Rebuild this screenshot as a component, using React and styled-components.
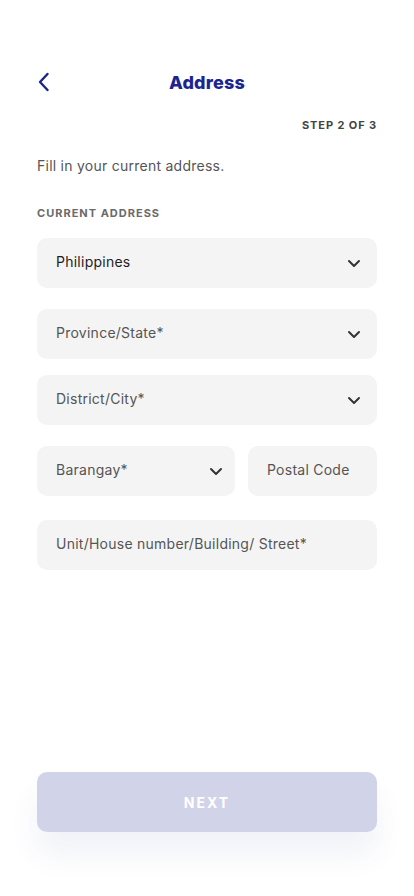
import React from 'react';
import styled, { createGlobalStyle } from 'styled-components';

const GlobalStyle = createGlobalStyle`
	* { box-sizing: border-box; }
	html, body { margin: 0; padding: 0; background: #ffffff; }
	body { font-family: Inter, "Noto Sans", sans-serif; }
`;

const Page = styled.div`
	min-height: 100vh;
	display: flex;
	flex-direction: column;
	padding: 62px 37px 64px 37px;
`;

const Header = styled.div`
	height: 40px;
	display: flex;
	align-items: center;
	justify-content: center;
	position: relative;
`;

const BackButton = styled.button`
	position: absolute;
	left: -4px;
	top: 50%;
	transform: translateY(-50%);
	border: none;
	background: none;
	padding: 4px;
	display: flex;
	cursor: pointer;
`;

const Title = styled.h1`
	margin: 0;
	font-size: 18px;
	font-weight: 800;
	letter-spacing: 0.2px;
	color: #1b2590;
`;

const Step = styled.div`
	margin-top: 16px;
	text-align: right;
	font-size: 11px;
	line-height: 14px;
	font-weight: 700;
	letter-spacing: 0.9px;
	color: #444444;
`;

const Intro = styled.p`
	margin: 24px 0 0;
	font-size: 14px;
	line-height: 20px;
	letter-spacing: 0.25px;
	color: #555555;
`;

const SectionLabel = styled.div`
	margin-top: 30px;
	font-size: 11px;
	line-height: 14px;
	font-weight: 700;
	letter-spacing: 1px;
	color: #6a6a6a;
	text-transform: uppercase;
`;

const Field = styled.div`
	height: 50px;
	margin-top: ${p => p.gap}px;
	flex: ${p => p.grow || 'none'};
	width: ${p => (p.width ? `${p.width}px` : 'auto')};
	background: #f4f4f4;
	border-radius: 10px;
	display: flex;
	align-items: center;
	justify-content: space-between;
	padding: 0 ${p => p.right || 17}px 3px 19px;
	font-size: 14px;
	letter-spacing: 0.25px;
	color: ${p => (p.filled ? '#1e1e1e' : '#555555')};
	> svg {
		margin-top: 3px;
	}
`;

const Row = styled.div`
	display: flex;
	gap: 13px;
	margin-top: ${p => p.gap}px;
	> div {
		margin-top: 0;
	}
`;

const Spacer = styled.div`
	flex: 1;
`;

const NextButton = styled.button`
	height: 60px;
	width: 100%;
	border: none;
	border-radius: 10px;
	background: #d1d3e8;
	color: #ffffff;
	font-family: Inter, "Noto Sans", sans-serif;
	font-size: 14px;
	font-weight: 700;
	letter-spacing: 2px;
	box-shadow: 0 22px 30px rgba(60, 70, 160, 0.07);
`;

const Chevron = () => (
	<svg width="14" height="14" viewBox="0 0 14 14" fill="none">
		<path d="M2 5l5 5 5-5" stroke="#333333" strokeWidth="2" strokeLinecap="round" strokeLinejoin="round" />
	</svg>
);

const BackIcon = () => (
	<svg width="14" height="20" viewBox="0 0 14 20" fill="none">
		<path d="M10.5 2L3 10l7.5 8" stroke="#1b2590" strokeWidth="2.4" strokeLinecap="round" strokeLinejoin="round" />
	</svg>
);

const App = () => (
	<Page>
		<GlobalStyle />
		<Header>
			<BackButton aria-label="Back">
				<BackIcon />
			</BackButton>
			<Title>Address</Title>
		</Header>
		<Step>STEP 2 OF 3</Step>
		<Intro>Fill in your current address.</Intro>
		<SectionLabel>Current Address</SectionLabel>
		<Field gap={18} right={16} filled>
			Philippines
			<Chevron />
		</Field>
		<Field gap={21} right={16}>
			Province/State*
			<Chevron />
		</Field>
		<Field gap={16} right={16}>
			District/City*
			<Chevron />
		</Field>
		<Row gap={21}>
			<Field grow={1} right={12}>
				Barangay*
				<Chevron />
			</Field>
			<Field width={129}>Postal Code</Field>
		</Row>
		<Field gap={24}>Unit/House number/Building/ Street*</Field>
		<Spacer />
		<NextButton>NEXT</NextButton>
	</Page>
);

export default App;
